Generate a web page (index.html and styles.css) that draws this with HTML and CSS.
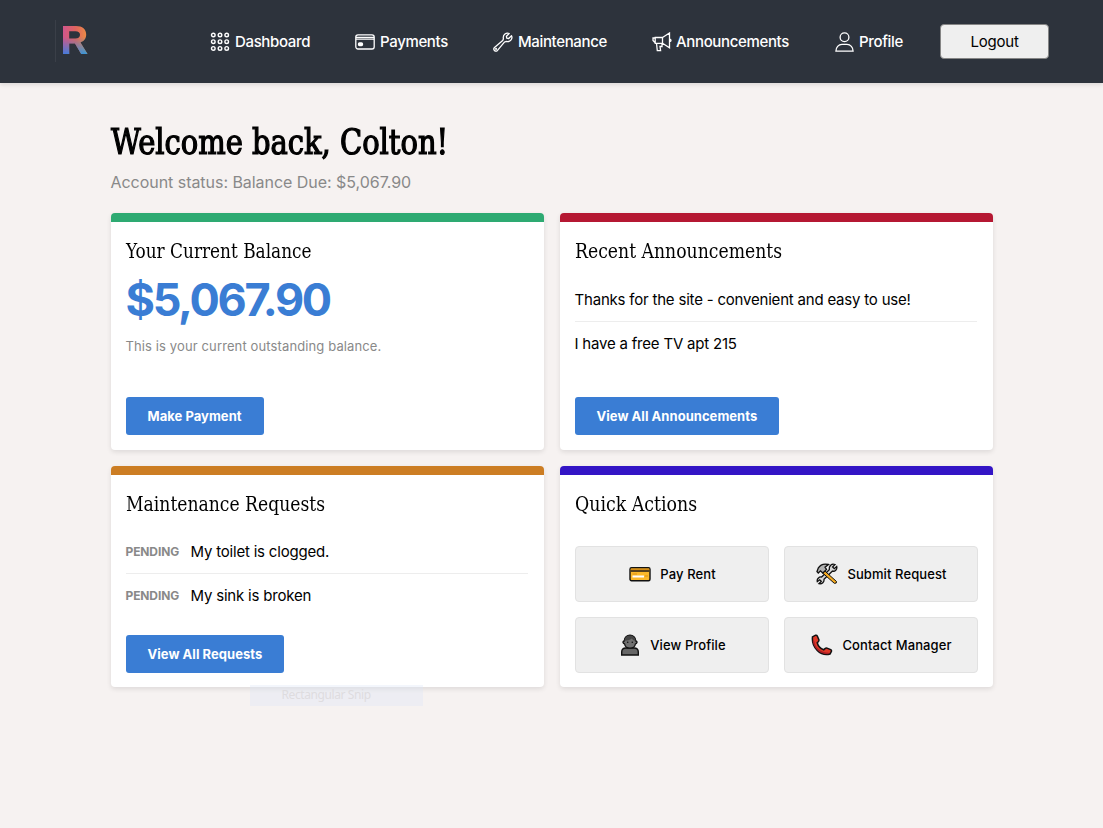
FILE: index.html
```html
<!DOCTYPE html>
<html lang="en">
<head>
<meta charset="utf-8">
<title>Resident Dashboard</title>
<link rel="stylesheet" href="styles.css">
</head>
<body>
<header class="header">
  <div class="brand">
    <svg width="27" height="30" viewBox="0 0 27 30" aria-label="R">
      <defs>
        <linearGradient id="warm" x1="0" y1="0" x2="1" y2="0"><stop offset="0" stop-color="#cf5590"/><stop offset=".5" stop-color="#df645f"/><stop offset="1" stop-color="#ee9440"/></linearGradient>
        <linearGradient id="cool" x1="0" y1="0" x2="1" y2="0"><stop offset="0" stop-color="#4c75d8"/><stop offset="1" stop-color="#3f9bd0"/></linearGradient>
        <linearGradient id="fade" x1="0" y1="0" x2="0" y2="1"><stop offset=".4" stop-color="#000"/><stop offset=".95" stop-color="#fff"/></linearGradient>
        <mask id="low"><rect width="27" height="30" fill="url(#fade)"/></mask>
        <clipPath id="mark"><path clip-rule="evenodd" d="M1 1H14C20.500 1 24.200 4.400 24.200 9.500C24.200 13.400 22 16.200 18.500 17.400L25.500 29H19.200L12.900 18.600H7.200V29H1ZM7.200 6.200V13.400H13.400C16.500 13.400 18 12.200 18 9.800C18 7.500 16.500 6.200 13.400 6.200Z"/></clipPath>
      </defs>
      <g clip-path="url(#mark)"><rect width="27" height="30" fill="url(#warm)"/><rect width="27" height="30" fill="url(#cool)" mask="url(#low)"/></g>
    </svg>
  </div>
  <nav class="nav">
    <a class="nav-link dashboard"><svg class="nav-icon" viewBox="0 0 20 20"><g stroke-width="1.400"><circle cx="3.300" cy="3" r="1.800"/><circle cx="10" cy="3" r="1.800"/><circle cx="16.700" cy="3" r="1.800"/><circle cx="3.300" cy="9.700" r="1.800"/><circle cx="10" cy="9.700" r="1.800"/><circle cx="16.700" cy="9.700" r="1.800"/><circle cx="3.300" cy="16.400" r="1.800"/><circle cx="10" cy="16.400" r="1.800"/><circle cx="16.700" cy="16.400" r="1.800"/></g></svg><span>Dashboard</span></a>
    <a class="nav-link payments"><svg class="nav-icon" viewBox="0 0 20 20"><rect x=".8" y="2.800" width="18.400" height="14.200" rx="2.200"/><path d="M1 5.300H19M1 7.200H19"/><rect x="3.500" y="11" width="4" height="2.600" rx="1" fill="#fff"/></svg><span>Payments</span></a>
    <a class="nav-link maintenance"><svg class="nav-icon" viewBox="0 0 20 20"><path d="M16.200 1.500C13.500.2 9.500 2.300 10.400 7L9.700 8.600L1.500 15.500C-.4 17.600 2.300 20.400 4.500 18.400L11.400 10.200L13 9.500C17.200 10.300 20 7 18.500 3.700L15.700 6.500L13.700 6.200L13.400 4.200Z" stroke-linejoin="round"/><circle cx="3.100" cy="16.900" r=".4"/></svg><span>Maintenance</span></a>
    <a class="nav-link announcements"><svg class="nav-icon" viewBox="0 0 20 20"><path d="M10.500 5.500L17.500 1V15.800L10.500 11.300M10.500 5.500H3.200V11.300H10.500V5.500M3.200 6H1V8.500L3.200 10.800M4.500 11.300L5.300 18.700H8.600L8 14.500H10V11.300M17.500 7.200C19.500 7.500 19.500 9.300 17.500 9.600"/></svg><span>Announcements</span></a>
    <a class="nav-link profile"><svg class="nav-icon" viewBox="0 0 20 20"><circle cx="9.500" cy="5.300" r="4.400"/><path d="M.9 19.200C.9 15.300 3.500 12.400 7 12.400H12C15.500 12.400 18.100 15.300 18.100 19.200Z"/></svg><span>Profile</span></a>
  </nav>
  <button class="logout">Logout</button>
</header>
<main class="main">
  <h1 class="welcome"><span class="slab">Welcome back, Colton!</span></h1>
  <p class="status">Account status: Balance Due: $5,067.90</p>
  <div class="cards">
    <section class="card green">
      <h2 class="title"><span class="slab t-balance">Your Current Balance</span></h2>
      <div class="amount">$5,067.90</div>
      <p class="note">This is your current outstanding balance.</p>
      <button class="primary">Make Payment</button>
    </section>
    <section class="card red">
      <h2 class="title"><span class="slab t-announce">Recent Announcements</span></h2>
      <ul class="list">
        <li class="item">Thanks for the site - convenient and easy to use!</li>
        <li class="item">I have a free TV apt 215</li>
      </ul>
      <button class="primary">View All Announcements</button>
    </section>
    <section class="card orange">
      <h2 class="title"><span class="slab t-requests">Maintenance Requests</span></h2>
      <ul class="list">
        <li class="item"><b class="tag">PENDING</b><span>My toilet is clogged.</span></li>
        <li class="item"><b class="tag">PENDING</b><span>My sink is broken</span></li>
      </ul>
      <button class="primary">View All Requests</button>
    </section>
    <section class="card indigo">
      <h2 class="title"><span class="slab t-quick">Quick Actions</span></h2>
      <div class="actions">
        <button class="action"><svg class="action-icon" viewBox="0 0 22 22"><rect x="1" y="4.700" width="20" height="13" rx="1.500" fill="#fbb829" stroke="#111" stroke-width="1.400"/><path d="M1.700 5.400H20.300V7H1.700Z" fill="#d18b16"/><path d="M1.700 7H20.300V9H1.700Z" fill="#55401d"/><path d="M3.500 13.500H15" stroke="#fff" stroke-width="2"/><path d="M16 13H19M3.500 11H8" stroke="#dc9318" stroke-width="1"/></svg><span>Pay Rent</span></button>
        <button class="action"><svg class="action-icon" viewBox="0 0 22 22"><path d="M13.400 4.300C14.500 1.300 17 .8 19 1.500L16.600 4L18.300 5.700L20.700 3.500C21.500 6.500 18.800 8.800 16.500 8.100L8 16.300C8.400 19 6.100 21.300 3 20.700L5.300 18.300L3.700 16.800L1.300 18.700C.6 16 3 13.700 5.600 14L13.300 6.600Z" fill="#d7d7d7" stroke="#111" stroke-width="1.300"/><path d="M8.300 7.500L20.500 18.500Q21 20.700 18.300 20.300L6.300 9.700Z" fill="#f4a91f" stroke="#111" stroke-width="1"/><path d="M1 8.500L2.200 5.200C4.500 1.300 8.500 .5 12.500 1.500L9 4.200L10.500 6.500L6.800 10L4.500 7.800L2.300 10Z" fill="#b0b0b0" stroke="#111" stroke-width="1.300"/></svg><span>Submit Request</span></button>
        <button class="action"><svg class="action-icon" viewBox="0 0 22 22"><path d="M2.700 21V18Q2.700 14 7 14H15Q19.300 14 19.300 18V21Z" fill="#666" stroke="#111" stroke-width="1.400"/><path d="M5.200 7C5.200-.7 16.800-.7 16.800 7C19 7.300 17.800 9.800 16.500 9.800C15.200 15.600 6.800 15.600 5.500 9.800C4.200 9.800 3 7.300 5.200 7Z" fill="#707070" stroke="#111" stroke-width="1.300"/><path d="M5.500 7C6-.2 16-.2 16.500 7C14.500 6.500 13.500 5.700 12.800 4.500C11 6 8 6.500 5.500 7Z" fill="#444"/><circle cx="8.700" cy="8.200" r=".8" fill="#111"/><circle cx="13.300" cy="8.200" r=".8" fill="#111"/></svg><span>View Profile</span></button>
        <button class="action"><svg class="action-icon" viewBox="0 0 22 22"><path d="M1.500 2.800L4.600 1.200Q5.800 .9 6.300 2L7.900 5.800Q8.100 7 7.300 7.700L6.200 8.800C7 11.800 9.700 14.700 12.700 15.800L14 14.600Q15 13.700 16 14.100L19.700 15.600Q20.800 16.200 20.400 17.400L19 20C9.500 22.500 .3 13.500 1.500 2.800Z" fill="#df3827" stroke="#111" stroke-width="1.500"/><path d="M2.500 7C3.500 14 9 19.500 17.500 19.500" fill="none" stroke="#a91d25" stroke-width="1.500"/></svg><span>Contact Manager</span></button>
      </div>
    </section>
  </div>
  <div class="snip">Rectangular Snip</div>
</main>
</body>
</html>
```
FILE: styles.css
```css
* { box-sizing: border-box; }
body { margin: 0; min-height: 828px; background: #f6f2f1; color: #000; font-family: Inter, "Liberation Sans", sans-serif; }
h1, h2, p, ul { margin: 0; padding: 0; font-weight: 400; }
button { font-family: inherit; color: #000; margin: 0; }
.header { height: 83px; padding: 0 54px 0 55px; background: #2d333c; box-shadow: 0 2px 4px rgba(0,0,0,.1); display: flex; align-items: center; }
.brand { width: 155px; height: 42px; padding: 5px 0 0 6px; border-left: 1px solid #3a3f48; margin-bottom: 1px; }
.brand svg { display: block; }
.nav { display: flex; width: 730px; }
.nav-link { display: flex; align-items: center; gap: 5px; color: #fff; font-size: 15px; font-weight: 500; letter-spacing: -.35px; line-height: 20px; white-space: nowrap; }
.nav-icon { width: 20px; height: 20px; flex: none; fill: none; stroke: #fff; stroke-width: 1.3; }
.dashboard { width: 145px; }
.payments { width: 138px; }
.maintenance { width: 159px; }
.announcements { width: 183px; gap: 4px; }
.profile { gap: 4px; }
.logout { width: 109px; height: 35px; border: 1px solid #858585; border-radius: 4px; background: #efefef; font-size: 15px; letter-spacing: -.2px; padding: 0; }
.main { position: relative; width: 883px; margin: 0 0 0 110.500px; padding-top: 36px; }
.slab { display: inline-block; white-space: nowrap; font-family: "DejaVu Serif Condensed", "DejaVu Serif", serif; font-stretch: condensed; transform-origin: 0 50%; }
.welcome { height: 46px; font-size: 34px; line-height: 46px; }
.welcome .slab { transform: scale(.947, 1.04); -webkit-text-stroke: 1.2px #000; }
.status { height: 24px; margin-top: 5px; font-size: 16px; line-height: 24px; letter-spacing: -.04px; color: #898989; }
.cards { display: grid; grid-template-columns: 433.500px 433.500px; grid-template-rows: 237px 222px; gap: 15px 15.500px; margin-top: 19.400px; }
.card { display: flex; flex-direction: column; align-items: flex-start; padding: 16px 15px 15px; border-top: 9px solid; border-radius: 4px; background: #fff; box-shadow: 0 2px 5px rgba(0,0,0,.1); }
.green { border-color: #2eaa72; }
.red { border-color: #b51832; }
.orange, .indigo { margin-top: .4px; padding-bottom: 14.400px; }
.orange { border-color: #cc7d23; }
.indigo { border-color: #3314c5; }
.title { height: 27px; font-size: 20px; line-height: 27px; }
.t-balance { transform: scaleX(.94); }
.t-announce { transform: scaleX(.958); }
.t-requests { transform: scaleX(.955); }
.t-quick { transform: scaleX(.966); }
.amount { margin-top: 6px; height: 58px; font-size: 45px; font-weight: 700; letter-spacing: -2.3px; line-height: 58px; color: #3a7dd4; }
.note { margin-top: 7px; font-size: 13px; line-height: 20px; letter-spacing: .12px; color: #898989; }
.primary { margin-top: auto; height: 38px; padding: 0 22px; border: 0; border-radius: 3px; background: #3a7dd4; color: #fff; font-size: 13px; font-weight: 700; letter-spacing: .04px; }
.list { width: 402px; margin-top: 12px; list-style: none; }
.item { display: flex; align-items: center; height: 43.500px; font-size: 15px; letter-spacing: -.2px; }
.item + .item { border-top: 1px solid #ededed; }
.tag { width: 65px; font-size: 12px; font-weight: 700; letter-spacing: -.12px; color: #898989; }
.actions { display: grid; width: 403px; grid-template-columns: 194px 194px; grid-template-rows: 56px 56px; gap: 15px; margin-top: 28px; }
.action { display: flex; align-items: center; justify-content: center; gap: 9px; padding: 0 0 0 2px; border: 1px solid #e2e2e2; border-radius: 4px; background: #efefef; font-size: 13px; font-weight: 500; letter-spacing: .1px; }
.action-icon { width: 22px; height: 22px; }
.snip { position: absolute; left: 139px; top: 602px; width: 173px; height: 21px; padding-left: 32px; background: rgba(220,230,247,.35); color: #dedcdf; font: 12px/19px "Noto Sans", sans-serif; letter-spacing: -.4px; }
```
